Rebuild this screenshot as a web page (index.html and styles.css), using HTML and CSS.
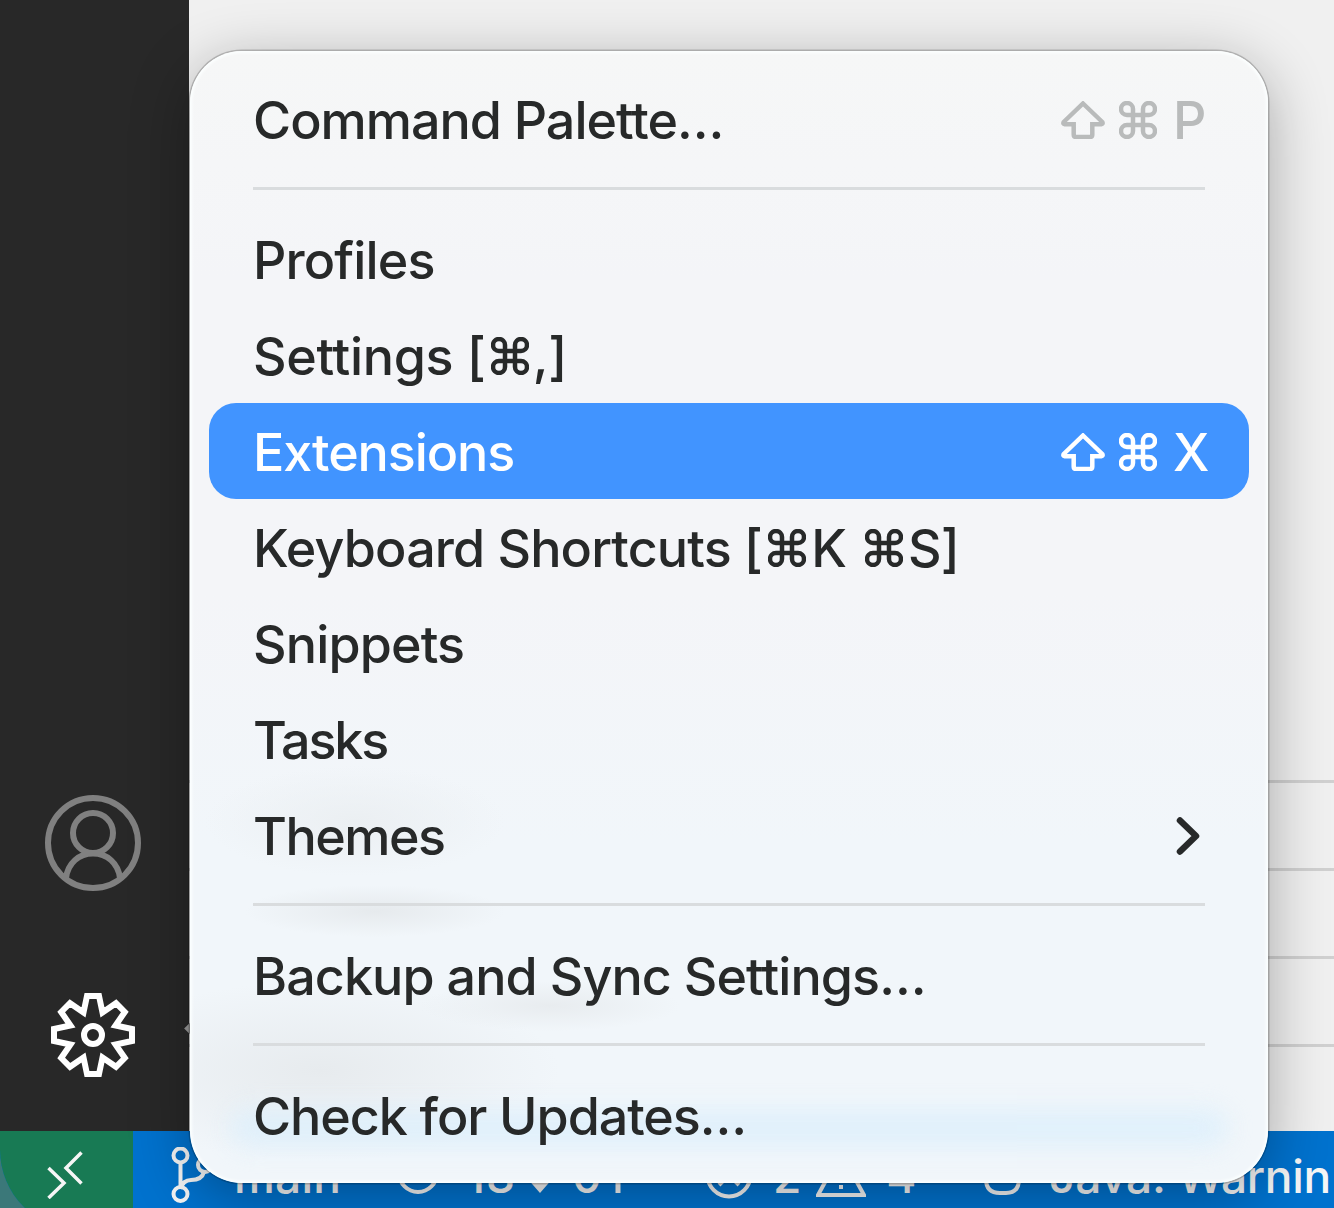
FILE: index.html
```html
<!DOCTYPE html>
<html lang="en">
<head>
<meta charset="utf-8">
<title>Manage menu</title>
<link rel="stylesheet" href="styles.css">
</head>
<body>
<svg class="defs" aria-hidden="true">
  <symbol id="shift" viewBox="0 0 44 38"><path d="M22 2.5 41.3 21q1 2-1 2.2H31.3V33.500q0 2.500-2.500 2.500H15.200q-2.500 0-2.500-2.500V23.200H3.700q-2-.2-1-2.200Z"/></symbol>
  <symbol id="command" viewBox="0 0 38 38"><path d="M14 14H24V24H14ZM14 14H8a6 6 0 1 1 6-6ZM24 14V8a6 6 0 1 1 6 6ZM24 24h6a6 6 0 1 1-6 6ZM14 24v6a6 6 0 1 1-6-6Z"/></symbol>
</svg>
<div class="window">
  <div class="main">
    <aside class="activity-bar">
      <svg class="account" viewBox="0 0 96 96"><circle cx="48" cy="48" r="45"/><circle cx="48" cy="38" r="20"/><path d="M21 83C23 68 34 58.500 48 58.500S73 68 75 83"/></svg>
      <svg class="gear" viewBox="-42 -42 84 84"><path d="M-6-39H6L9.500-22.500 23-31.800 31.800-23 22.500-9.500 39-6V6L22.500 9.500 31.800 23 23 31.800 9.500 22.500 6 39H-6L-9.500 22.500-23 31.800-31.800 23-22.500 9.500-39 6V-6L-22.500-9.500-31.800-23-23-31.800-9.500-22.500Z"/><circle r="9"/></svg>
    </aside>
    <section class="editor">
      <div class="line"></div><div class="line"></div><div class="line"></div><div class="line"></div>
    </section>
  </div>
  <footer class="status-bar">
    <div class="remote"><svg viewBox="0 0 36 48"><path d="M1.500 17 17 32 1.500 47M34.500 1.500 19 17 34.500 32.500"/></svg></div>
    <div class="item branch"><svg viewBox="0 0 44 56"><circle cx="9.500" cy="8.500" r="7"/><circle cx="9.500" cy="47" r="7"/><circle cx="34" cy="18" r="7"/><path d="M9.500 16V40M9.500 42Q12 33 20 33 31 33 33 25"/></svg><span>main</span></div>
    <div class="item sync"><svg viewBox="0 0 44 44"><circle cx="22" cy="22" r="19"/></svg><span>18</span><svg class="arrow down" viewBox="0 0 28 38"><path d="M14 1V30"/><path class="solid" d="M0 22 14 38 28 22Z"/></svg><span class="zero">0</span><svg class="arrow up" viewBox="0 0 28 38"><path d="M14 38V8"/><path class="solid" d="M1 16 14 1 27 16Z"/></svg></div>
    <div class="item problems"><svg viewBox="0 0 48 48"><circle cx="24" cy="24" r="21.500"/><path d="M14 14 34 34M34 14 14 34"/></svg><span>2</span><svg class="warning" viewBox="0 0 50 46"><path d="M25 2 48 44H2ZM25 16V29M25 34V38"/></svg><span>4</span></div>
    <div class="item java"><svg viewBox="0 0 46 44"><path d="M2 6H35V28Q35 42 22 42H16Q2 42 2 28ZM35 12Q44 12 44 20T33 31"/></svg><span>Java: Warnin</span></div>
  </footer>
</div>

<span class="pointer"></span>
<nav class="menu">
  <div class="row"><span class="label palette">Command Palette…</span><span class="keys dim"><svg class="shift"><use href="#shift"/></svg><svg class="command"><use href="#command"/></svg><kbd>P</kbd></span></div>
  <hr>
  <div class="row"><span class="label profiles">Profiles</span></div>
  <div class="row"><span class="label settings">Settings [<svg class="command"><use href="#command"/></svg>,]</span></div>
  <div class="row active"><span class="label extensions">Extensions</span><span class="keys"><svg class="shift"><use href="#shift"/></svg><svg class="command"><use href="#command"/></svg><kbd>X</kbd></span></div>
  <div class="row"><span class="label keyboard">Keyboard Shortcuts [<svg class="command"><use href="#command"/></svg>K <svg class="command"><use href="#command"/></svg>S]</span></div>
  <div class="row"><span class="label snippets">Snippets</span></div>
  <div class="row"><span class="label tasks">Tasks</span></div>
  <div class="row"><span class="label themes">Themes</span><svg class="chevron" viewBox="0 0 24 38"><path d="M4 3.500 20 19 4 34.500"/></svg></div>
  <hr>
  <div class="row"><span class="label backup">Backup and Sync Settings…</span></div>
  <hr>
  <div class="row"><span class="label updates">Check for Updates…</span></div>
</nav>
</body>
</html>
```
FILE: styles.css
```css
* { box-sizing: border-box; }
body {
  margin: 0;
  width: 1334px;
  height: 1208px;
  overflow: hidden;
  position: relative;
  font-family: Inter, "Liberation Sans", sans-serif;
  background: #3b7879;
}
svg { display: block; flex: none; fill: none; stroke: currentColor; }
.defs { position: absolute; width: 0; height: 0; }

.window { height: 1208px; overflow: hidden; display: flex; flex-direction: column; }
.main { flex: none; height: 1131px; display: flex; }
.activity-bar {
  width: 189px;
  background: #282828;
  display: flex;
  flex-direction: column;
  justify-content: flex-end;
  align-items: center;
  gap: 102px;
  padding: 0 3px 54px 0;
}
.account { width: 96px; height: 96px; color: #808080; stroke-width: 6; }
.gear { width: 84px; height: 84px; color: #fff; stroke-width: 6; }
.editor {
  flex: 1;
  background: #f0f0f0;
  display: flex;
  flex-direction: column;
  justify-content: flex-end;
  gap: 85px;
  padding-bottom: 84px;
}
.line { height: 3px; background: #d0d0d0; }

.status-bar {
  flex: none;
  height: 99px;
  display: flex;
  align-items: flex-start;
  background: #0072ce;
  border-bottom-left-radius: 80px;
  overflow: hidden;
  color: #f6f6f6;
  font-size: 46px;
  line-height: 58px;
  font-weight: 500;
}
.remote { flex: none; width: 133px; height: 99px; background: #187a54; padding: 20px 0 0 47px; }
.remote svg { width: 36px; height: 48px; stroke-width: 3.500px; }
.item { flex: none; display: flex; align-items: flex-start; padding-top: 16px; white-space: nowrap; stroke-width: 4px; }
.branch { width: 263px; padding-left: 38px; }
.branch svg { width: 44px; height: 56px; }
.branch span { margin-left: 19px; letter-spacing: .2px; }
.sync { width: 309px; }
.sync > svg:first-child { width: 44px; height: 44px; margin-top: 4px; }
.sync span { margin-left: 26px; width: 63px; letter-spacing: 1px; }
.sync .arrow { width: 28px; height: 38px; margin-top: 8px; stroke-width: 5px; margin-left: -3px; }
.sync .zero { margin-left: 18px; width: 35px; }
.arrow .solid { fill: currentColor; stroke: none; }
.problems { width: 279px; }
.problems > svg { width: 48px; height: 48px; margin-top: 4px; }
.problems span { margin-left: 20px; }
.problems .warning { width: 50px; height: 46px; margin-left: 15px; }
.java svg { width: 46px; height: 44px; margin-top: 4px; }
.java span { margin-left: 19px; letter-spacing: -.3px; }

.pointer {
  position: absolute;
  left: 186px;
  top: 1024px;
  width: 9px;
  height: 9px;
  background: #9a9a9a;
  transform: rotate(45deg);
}

.menu {
  position: absolute;
  left: 190px;
  top: 51px;
  width: 1078px;
  height: 1132px;
  padding: 20px 19px;
  border-radius: 52px;
  overflow: hidden;
  color: #272929;
  background:
    radial-gradient(ellipse 130px 26px at 185px 860px, #e6eaed, transparent),
    radial-gradient(ellipse 150px 55px at 165px 770px, #ebeff2, transparent),
    radial-gradient(ellipse 130px 25px at 360px 955px, #e8ecef, transparent),
    radial-gradient(ellipse 240px 90px at 130px 1020px, #e7ebee, transparent),
    linear-gradient(#f6f7f7 0, #f4f5f8 20%, #f4f5f8 48%, #f1f6fa 70%, #f1f6fa 100%);
  box-shadow: 0 0 0 1.500px rgba(0, 0, 0, .2), 0 14px 60px rgba(0, 0, 0, .32);
}
.menu::before {
  content: "";
  position: absolute;
  left: 40px;
  bottom: 36px;
  width: 998px;
  height: 38px;
  border-radius: 20px;
  background: #dceffc;
  opacity: .8;
  filter: blur(12px);
}
.menu::after {
  content: "";
  position: absolute;
  inset: 0;
  border-radius: 52px;
  box-shadow: inset 0 0 3px 2px #fcffff;
}
.row {
  position: relative;
  height: 96px;
  padding: 0 45px 0 44px;
  display: flex;
  align-items: center;
  justify-content: space-between;
  border-radius: 27px;
  font-size: 52px;
  line-height: 64px;
  font-weight: 450;
  white-space: pre;
}
.active { background: #4194ff; color: #fff; font-weight: 500; }
.menu hr { position: relative; height: 3px; margin: 20px 44px 21px; border: 0; background: #d9dcde; }
.label { display: block; padding-top: 4px; }
.palette { letter-spacing: -1px; }
.profiles { letter-spacing: -.85px; }
.settings { letter-spacing: -.3px; }
.extensions { letter-spacing: -1.100px; }
.keyboard { letter-spacing: -.85px; }
.snippets { letter-spacing: -.85px; }
.tasks { letter-spacing: -2.100px; }
.themes { letter-spacing: -1.500px; }
.backup { letter-spacing: -.92px; }
.updates { letter-spacing: -1.050px; }
.command { width: 38px; height: 38px; stroke-width: 4px; }
.label .command { display: inline-block; margin: 0 4px 0 5px; stroke-width: 4.500px; }
.keyboard .command { margin: 0 5px 0 6px; }
.shift { width: 44px; height: 38px; stroke-width: 4.500px; }
.keys { width: 147px; display: flex; align-items: center; margin: 2px -4px 0 0; }
.keys .command { margin-left: 14px; stroke-width: 4.500px; }
.keys kbd { font: inherit; margin-left: 16px; padding-top: 2px; }
.dim { color: #b9bbbb; }
.chevron { width: 24px; height: 38px; margin-right: 4px; margin-top: 2px; stroke-width: 6.500px; stroke-linecap: round; stroke-linejoin: round; }
```
